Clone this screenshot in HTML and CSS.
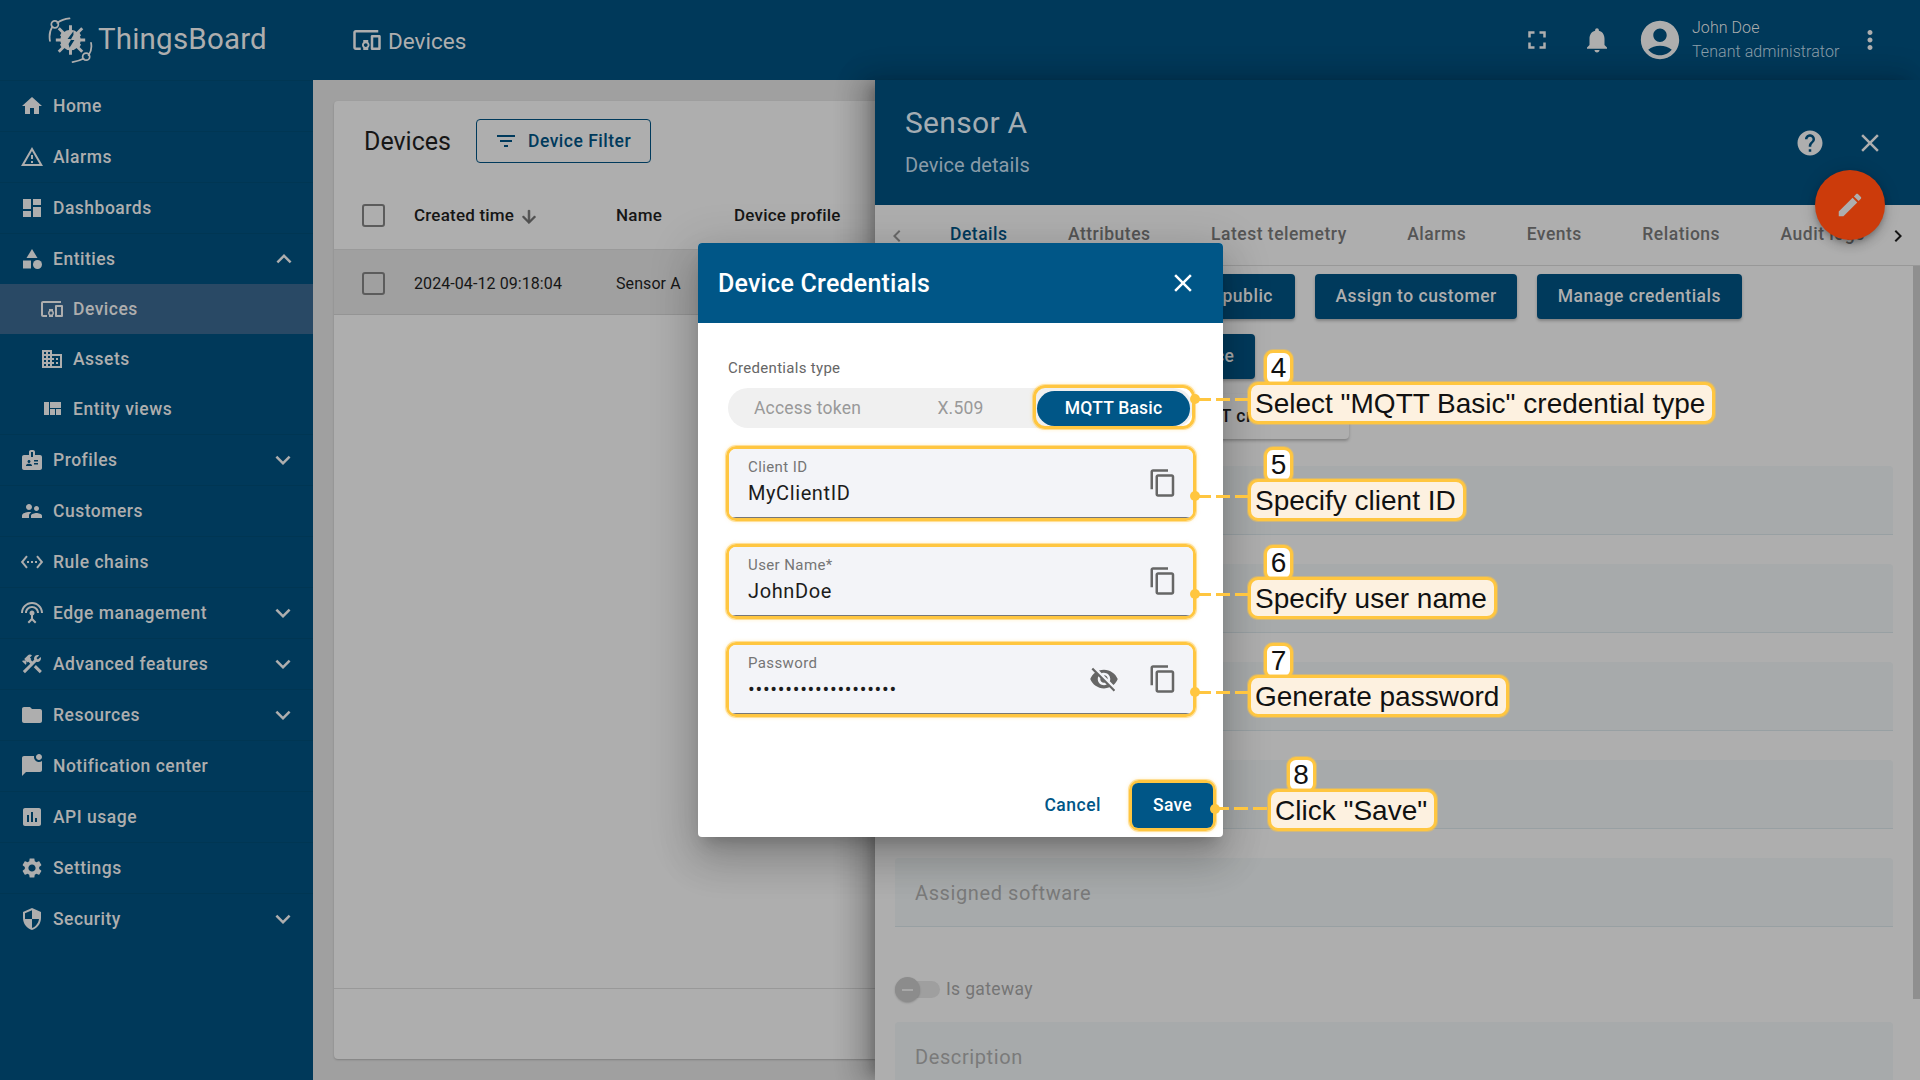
FILE: index.html
```html
<!DOCTYPE html>
<html lang="en">
<head>
<meta charset="utf-8">
<title>ThingsBoard - Devices</title>
<link rel="stylesheet" href="styles.css">
</head>
<body>
<svg class="sprite" width="0" height="0" aria-hidden="true">
  <symbol id="i-home" viewBox="0 0 24 24"><path d="M10 20v-6h4v6h5v-8h3L12 3 2 12h3v8z"/></symbol>
  <symbol id="i-warning" viewBox="0 0 24 24"><path d="M12 5.99L19.53 19H4.47L12 5.99M12 2L1 21h22L12 2zm1 14h-2v2h2v-2zm0-6h-2v4h2v-4z"/></symbol>
  <symbol id="i-dashboard" viewBox="0 0 24 24"><path d="M3 13h8V3H3v10zm0 8h8v-6H3v6zm10 0h8V11h-8v10zm0-18v6h8V3h-8z"/></symbol>
  <symbol id="i-category" viewBox="0 0 24 24"><path d="M12 2l-5.5 9h11z"/><circle cx="17.5" cy="17.5" r="4.5"/><path d="M3 13.5h8v8H3z"/></symbol>
  <symbol id="i-devices" viewBox="0 0 24 24"><path d="M3 6h18V4H3c-1.1 0-2 .9-2 2v12c0 1.1.9 2 2 2h4v-2H3V6zm10 6H9v1.78c-.61.55-1 1.33-1 2.22s.39 1.67 1 2.22V20h4v-1.78c.61-.55 1-1.34 1-2.22s-.39-1.67-1-2.22V12zm-2 5.5c-.83 0-1.5-.67-1.5-1.5s.67-1.5 1.5-1.5 1.5.67 1.5 1.5-.67 1.5-1.5 1.5zM22 8h-6c-.5 0-1 .5-1 1v10c0 .5.5 1 1 1h6c.5 0 1-.5 1-1V9c0-.5-.5-1-1-1zm-1 10h-4v-8h4v8z"/></symbol>
  <symbol id="i-domain" viewBox="0 0 24 24"><path d="M12 7V3H2v18h20V7H12zM6 19H4v-2h2v2zm0-4H4v-2h2v2zm0-4H4V9h2v2zm0-4H4V5h2v2zm4 12H8v-2h2v2zm0-4H8v-2h2v2zm0-4H8V9h2v2zm0-4H8V5h2v2zm10 12h-8v-2h2v-2h-2v-2h2v-2h-2V9h8v10zm-2-8h-2v2h2v-2zm0 4h-2v2h2v-2z"/></symbol>
  <symbol id="i-quilt" viewBox="0 0 24 24"><path d="M10 18h5v-6h-5v6zm-6 0h5V5H4v13zm12 0h5v-6h-5v6zM10 5v6h11V5H10z"/></symbol>
  <symbol id="i-badge" viewBox="0 0 24 24"><path d="M20 7h-5V4c0-1.1-.9-2-2-2h-2c-1.1 0-2 .9-2 2v3H4c-1.1 0-2 .9-2 2v11c0 1.1.9 2 2 2h16c1.1 0 2-.9 2-2V9c0-1.1-.9-2-2-2zM9 12c.83 0 1.5.67 1.5 1.5S9.83 15 9 15s-1.5-.67-1.5-1.5S8.17 12 9 12zm3 6H6v-.43c0-.6.36-1.15.92-1.39.64-.28 1.34-.43 2.08-.43s1.44.15 2.08.43c.55.24.92.78.92 1.39V18zm1-9h-2V4h2v5zm5 7.5h-4V15h4v1.5zm0-3h-4V12h4v1.5z"/></symbol>
  <symbol id="i-people" viewBox="0 0 24 24"><path d="M16.5 12c1.38 0 2.49-1.12 2.49-2.5S17.88 7 16.5 7C15.12 7 14 8.12 14 9.5s1.12 2.5 2.5 2.5zM9 11c1.66 0 2.99-1.34 2.99-3S10.66 5 9 5C7.34 5 6 6.34 6 8s1.34 3 3 3zm7.5 3c-1.83 0-5.5.92-5.5 2.75V19h11v-2.25c0-1.83-3.67-2.75-5.5-2.75zM9 13c-2.33 0-7 1.17-7 3.5V19h7v-2.25c0-.85.33-2.34 2.37-3.47C10.5 13.1 9.66 13 9 13z"/></symbol>
  <symbol id="i-ethernet" viewBox="0 0 24 24"><path d="M7.77 6.76L6.23 5.48.82 12l5.41 6.52 1.54-1.28L3.42 12l4.35-5.24zM7 13h2v-2H7v2zm10-2h-2v2h2v-2zm-6 2h2v-2h-2v2zm6.77-7.52l-1.54 1.28L20.58 12l-4.35 5.24 1.54 1.28L23.18 12l-5.41-6.52z"/></symbol>
  <symbol id="i-antenna" viewBox="0 0 24 24"><path d="M12 5c-3.87 0-7 3.13-7 7h2c0-2.76 2.24-5 5-5s5 2.24 5 5h2c0-3.87-3.13-7-7-7zm1 9.29c.88-.39 1.5-1.26 1.5-2.29 0-1.38-1.12-2.5-2.5-2.5S9.5 10.62 9.5 12c0 1.02.62 1.9 1.5 2.29v3.3L7.59 21 9 22.41l3-3 3 3L16.41 21 13 17.59v-3.3zM12 1C5.93 1 1 5.93 1 12h2c0-4.97 4.03-9 9-9s9 4.03 9 9h2c0-6.07-4.93-11-11-11z"/></symbol>
  <symbol id="i-construction" viewBox="0 0 24 24"><path d="M13.783 15.172l2.121-2.121 5.996 5.996-2.121 2.121zM17.5 10c1.93 0 3.5-1.57 3.5-3.5 0-.58-.16-1.12-.41-1.6l-2.7 2.7-1.49-1.49 2.7-2.7c-.48-.25-1.02-.41-1.6-.41C15.57 3 14 4.57 14 6.5c0 .41.08.8.21 1.16l-1.85 1.85-1.78-1.78.71-.71-1.41-1.41L12 3.49c-1.17-1.17-3.07-1.17-4.24 0L4.22 7.03l1.41 1.41H2.81l-.71.71 3.54 3.54.71-.71V9.15l1.41 1.41.71-.71 1.78 1.78-7.41 7.41 2.12 2.12L16.34 9.79c.36.13.75.21 1.16.21z"/></symbol>
  <symbol id="i-folder" viewBox="0 0 24 24"><path d="M10 4H4c-1.1 0-1.99.9-1.99 2L2 18c0 1.1.9 2 2 2h16c1.1 0 2-.9 2-2V8c0-1.1-.9-2-2-2h-8l-2-2z"/></symbol>
  <symbol id="i-chat" viewBox="0 0 24 24"><path d="M22 6.98V16c0 1.1-.9 2-2 2H6l-4 4V4c0-1.1.9-2 2-2h10.1c-.06.32-.1.66-.1 1 0 2.76 2.24 5 5 5 1.13 0 2.16-.39 3-1.02zM16 3c0 1.66 1.34 3 3 3s3-1.34 3-3-1.34-3-3-3-3 1.34-3 3z"/></symbol>
  <symbol id="i-chart" viewBox="0 0 24 24"><path d="M19 3H5c-1.1 0-2 .9-2 2v14c0 1.1.9 2 2 2h14c1.1 0 2-.9 2-2V5c0-1.1-.9-2-2-2zM9 17H7v-7h2v7zm4 0h-2V7h2v10zm4 0h-2v-4h2v4z"/></symbol>
  <symbol id="i-settings" viewBox="0 0 24 24"><path d="M19.14 12.94c.04-.3.06-.61.06-.94 0-.32-.02-.64-.07-.94l2.03-1.58c.18-.14.23-.41.12-.61l-1.92-3.32c-.12-.22-.37-.29-.59-.22l-2.39.96c-.5-.38-1.03-.7-1.62-.94l-.36-2.54c-.04-.24-.24-.41-.48-.41h-3.84c-.24 0-.43.17-.47.41l-.36 2.54c-.59.24-1.13.57-1.62.94l-2.39-.96c-.22-.08-.47 0-.59.22L2.74 8.87c-.12.21-.08.47.12.61l2.03 1.58c-.05.3-.09.63-.09.94s.02.64.07.94l-2.03 1.58c-.18.14-.23.41-.12.61l1.92 3.32c.12.22.37.29.59.22l2.39-.96c.5.38 1.03.7 1.62.94l.36 2.54c.05.24.24.41.48.41h3.84c.24 0 .44-.17.47-.41l.36-2.54c.59-.24 1.13-.56 1.62-.94l2.39.96c.22.08.47 0 .59-.22l1.92-3.32c.12-.22.07-.47-.12-.61l-2.01-1.58zM12 15.6c-1.98 0-3.6-1.62-3.6-3.6s1.62-3.6 3.6-3.6 3.6 1.62 3.6 3.6-1.62 3.6-3.6 3.6z"/></symbol>
  <symbol id="i-security" viewBox="0 0 24 24"><path d="M12 1L3 5v6c0 5.55 3.84 10.74 9 12 5.16-1.26 9-6.45 9-12V5l-9-4zm0 10.99h7c-.53 4.12-3.28 7.79-7 8.94V12H5V6.3l7-3.11v8.8z"/></symbol>
  <symbol id="i-more" viewBox="0 0 24 24"><path d="M16.59 8.59L12 13.17 7.41 8.59 6 10l6 6 6-6z"/></symbol>
  <symbol id="i-less" viewBox="0 0 24 24"><path d="M12 8l-6 6 1.41 1.41L12 10.83l4.59 4.58L18 14z"/></symbol>
  <symbol id="i-fullscreen" viewBox="0 0 24 24"><path d="M7 14H5v5h5v-2H7v-3zm-2-4h2V7h3V5H5v5zm12 7h-3v2h5v-5h-2v3zM14 5v2h3v3h2V5h-5z"/></symbol>
  <symbol id="i-bell" viewBox="0 0 24 24"><path d="M12 22c1.1 0 2-.9 2-2h-4c0 1.1.89 2 2 2zm6-6v-5c0-3.07-1.64-5.64-4.5-6.32V4c0-.83-.67-1.5-1.5-1.5s-1.5.67-1.5 1.5v.68C7.63 5.36 6 7.92 6 11v5l-2 2v1h16v-1l-2-2z"/></symbol>
  <symbol id="i-account" viewBox="0 0 24 24"><path d="M12 2C6.48 2 2 6.48 2 12s4.48 10 10 10 10-4.48 10-10S17.52 2 12 2zm0 4c1.93 0 3.5 1.57 3.5 3.5S13.93 13 12 13s-3.5-1.57-3.5-3.5S10.07 6 12 6zm0 14c-2.03 0-4.43-.82-6.14-2.88C7.55 15.8 9.68 15 12 15s4.45.8 6.14 2.12C16.43 19.18 14.03 20 12 20z"/></symbol>
  <symbol id="i-vert" viewBox="0 0 24 24"><path d="M12 8c1.1 0 2-.9 2-2s-.9-2-2-2-2 .9-2 2 .9 2 2 2zm0 2c-1.1 0-2 .9-2 2s.9 2 2 2 2-.9 2-2-.9-2-2-2zm0 6c-1.1 0-2 .9-2 2s.9 2 2 2 2-.9 2-2-.9-2-2-2z"/></symbol>
  <symbol id="i-help" viewBox="0 0 24 24"><path d="M12 2C6.48 2 2 6.48 2 12s4.48 10 10 10 10-4.48 10-10S17.52 2 12 2zm1 17h-2v-2h2v2zm2.07-7.75l-.9.92C13.45 12.9 13 13.5 13 15h-2v-.5c0-1.1.45-2.1 1.17-2.83l1.24-1.26c.37-.36.59-.86.59-1.41 0-1.1-.9-2-2-2s-2 .9-2 2H8c0-2.21 1.79-4 4-4s4 1.79 4 4c0 .88-.36 1.68-.93 2.25z"/></symbol>
  <symbol id="i-close" viewBox="0 0 24 24"><path d="M19 6.41L17.59 5 12 10.59 6.41 5 5 6.41 10.59 12 5 17.59 6.41 19 12 13.41 17.59 19 19 17.59 13.41 12z"/></symbol>
  <symbol id="i-edit" viewBox="0 0 24 24"><path d="M3 17.25V21h3.75L17.81 9.94l-3.75-3.75L3 17.25zM20.71 7.04c.39-.39.39-1.02 0-1.41l-2.34-2.34c-.39-.39-1.02-.39-1.41 0l-1.83 1.83 3.75 3.75 1.83-1.83z"/></symbol>
  <symbol id="i-filter" viewBox="0 0 24 24"><path d="M10 18h4v-2h-4v2zM3 6v2h18V6H3zm3 7h12v-2H6v2z"/></symbol>
  <symbol id="i-down" viewBox="0 0 24 24"><path d="M20 12l-1.41-1.41L13 16.17V4h-2v12.17l-5.58-5.59L4 12l8 8 8-8z"/></symbol>
  <symbol id="i-copy" viewBox="0 0 24 24"><path d="M16 1H4c-1.1 0-2 .9-2 2v14h2V3h12V1zm3 4H8c-1.1 0-2 .9-2 2v14c0 1.1.9 2 2 2h11c1.1 0 2-.9 2-2V7c0-1.1-.9-2-2-2zm0 16H8V7h11v14z"/></symbol>
  <symbol id="i-eyeoff" viewBox="0 0 24 24"><path d="M12 7c2.76 0 5 2.24 5 5 0 .65-.13 1.26-.36 1.83l2.92 2.92c1.51-1.26 2.7-2.89 3.43-4.75-1.73-4.39-6-7.5-11-7.5-1.4 0-2.74.25-3.98.7l2.16 2.16C10.74 7.13 11.35 7 12 7zM2 4.27l2.28 2.28.46.46C3.08 8.3 1.78 10.02 1 12c1.73 4.39 6 7.5 11 7.5 1.55 0 3.03-.3 4.38-.84l.42.42L19.73 22 21 20.73 3.27 3 2 4.27zM7.53 9.8l1.55 1.55c-.05.21-.08.43-.08.65 0 1.66 1.34 3 3 3 .22 0 .44-.03.65-.08l1.55 1.55c-.67.33-1.41.53-2.2.53-2.76 0-5-2.24-5-5 0-.79.2-1.53.53-2.2zm4.31-.78l3.15 3.15.02-.16c0-1.66-1.34-3-3-3l-.17.01z"/></symbol>
  <symbol id="i-left" viewBox="0 0 24 24"><path d="M15.41 7.41L14 6l-6 6 6 6 1.41-1.41L10.83 12z"/></symbol>
  <symbol id="i-right" viewBox="0 0 24 24"><path d="M10 6L8.59 7.41 13.17 12l-4.58 4.59L10 18l6-6z"/></symbol>
</svg>

<div class="app">
  <aside class="sidebar">
    <div class="logo">
      <svg class="logo-mark" viewBox="0 0 46 46">
        <g fill="none" stroke="#aeaeae" stroke-width="1.8" stroke-linecap="round">
          <path d="M2 24C1 18 2 13 4.500 9.500"/>
          <path d="M9.500 5.500C13 3 17 1.500 22 1"/>
          <circle cx="7" cy="7" r="3.600"/>
          <path d="M44 26C45 31 44 35 41.500 38.500"/>
          <path d="M36.500 42C33 44 29 45 25 45.500"/>
          <circle cx="39" cy="40" r="3.600"/>
        </g>
        <g fill="#aeaeae">
          <circle cx="23" cy="23" r="10.500"/>
          <g stroke="#aeaeae" stroke-width="3">
            <path d="M11 11l24 24M35 11L11 35M23 8v30M8 23h30M13 17l20 12M33 17L13 29"/>
          </g>
        </g>
        <path d="M26 14l-6 8h4l-3 5 1 4 5-8h-4l3-5z" fill="#00395a"/>
      </svg>
      <span class="logo-text">ThingsBoard</span>
    </div>
    <nav class="menu">
      <a class="item"><svg class="ic"><use href="#i-home"/></svg><span>Home</span></a>
      <a class="item"><svg class="ic"><use href="#i-warning"/></svg><span>Alarms</span></a>
      <a class="item"><svg class="ic"><use href="#i-dashboard"/></svg><span>Dashboards</span></a>
      <a class="item open"><svg class="ic"><use href="#i-category"/></svg><span>Entities</span><svg class="chev"><use href="#i-less"/></svg></a>
      <div class="subgroup">
        <a class="sub active"><svg class="ic"><use href="#i-devices"/></svg><span>Devices</span></a>
        <a class="sub"><svg class="ic"><use href="#i-domain"/></svg><span>Assets</span></a>
        <a class="sub"><svg class="ic"><use href="#i-quilt"/></svg><span>Entity views</span></a>
      </div>
      <a class="item"><svg class="ic"><use href="#i-badge"/></svg><span>Profiles</span><svg class="chev"><use href="#i-more"/></svg></a>
      <a class="item"><svg class="ic"><use href="#i-people"/></svg><span>Customers</span></a>
      <a class="item"><svg class="ic"><use href="#i-ethernet"/></svg><span>Rule chains</span></a>
      <a class="item"><svg class="ic"><use href="#i-antenna"/></svg><span>Edge management</span><svg class="chev"><use href="#i-more"/></svg></a>
      <a class="item"><svg class="ic"><use href="#i-construction"/></svg><span>Advanced features</span><svg class="chev"><use href="#i-more"/></svg></a>
      <a class="item"><svg class="ic"><use href="#i-folder"/></svg><span>Resources</span><svg class="chev"><use href="#i-more"/></svg></a>
      <a class="item"><svg class="ic"><use href="#i-chat"/></svg><span>Notification center</span></a>
      <a class="item"><svg class="ic"><use href="#i-chart"/></svg><span>API usage</span></a>
      <a class="item"><svg class="ic"><use href="#i-settings"/></svg><span>Settings</span></a>
      <a class="item"><svg class="ic"><use href="#i-security"/></svg><span>Security</span><svg class="chev"><use href="#i-more"/></svg></a>
    </nav>
  </aside>

  <div class="column">
    <header class="topbar">
      <div class="crumb"><svg class="ic30"><use href="#i-devices"/></svg><span>Devices</span></div>
      <div class="top-actions">
        <span class="icon-btn"><svg class="ic30"><use href="#i-fullscreen"/></svg></span>
        <span class="icon-btn"><svg class="ic30"><use href="#i-bell"/></svg></span>
        <svg class="avatar"><use href="#i-account"/></svg>
        <div class="user"><div class="user-name">John Doe</div><div class="user-role">Tenant administrator</div></div>
        <span class="icon-btn"><svg class="ic30"><use href="#i-vert"/></svg></span>
      </div>
    </header>

    <div class="workspace">
      <main class="list-area">
        <section class="card">
          <div class="card-bar">
            <h2 class="card-title">Devices</h2>
            <button class="filter-btn"><svg class="ic24"><use href="#i-filter"/></svg><span>Device Filter</span></button>
          </div>
          <div class="table-row table-head">
            <span class="check"></span>
            <span class="sort">Created time<svg class="ic20"><use href="#i-down"/></svg></span>
            <span>Name</span>
            <span>Device profile</span>
          </div>
          <div class="table-row table-body">
            <span class="check"></span>
            <span>2024-04-12 09:18:04</span>
            <span>Sensor A</span>
            <span></span>
          </div>
          <div class="card-fill"></div>
          <div class="card-foot"></div>
        </section>
      </main>

      <section class="panel">
        <div class="panel-head">
          <div class="panel-titles">
            <div class="panel-title">Sensor A</div>
            <div class="panel-sub">Device details</div>
          </div>
          <div class="panel-actions">
            <span class="icon-btn"><svg class="ic30"><use href="#i-help"/></svg></span>
            <span class="icon-btn"><svg class="ic30"><use href="#i-close"/></svg></span>
          </div>
        </div>
        <div class="fab"><svg class="ic30"><use href="#i-edit"/></svg></div>
        <div class="tabs">
          <svg class="tab-arrow dim"><use href="#i-left"/></svg>
          <div class="tab-list">
            <span class="tab current">Details</span>
            <span class="tab">Attributes</span>
            <span class="tab">Latest telemetry</span>
            <span class="tab">Alarms</span>
            <span class="tab">Events</span>
            <span class="tab">Relations</span>
            <span class="tab">Audit logs</span>
          </div>
          <svg class="tab-arrow"><use href="#i-right"/></svg>
        </div>
        <div class="panel-body">
          <div class="btn-row">
            <button class="btn w-open">Open details page</button>
            <button class="btn w-public">Make device public</button>
            <button class="btn">Assign to customer</button>
            <button class="btn">Manage credentials</button>
          </div>
          <div class="btn-row">
            <button class="btn w-del">Delete device</button>
          </div>
          <div class="btn-row">
            <button class="btn light w-copy">Copy MQTT credentials</button>
          </div>
          <div class="d-field"></div>
          <div class="d-field"></div>
          <div class="d-field"></div>
          <div class="d-field"></div>
          <div class="d-field"><span>Assigned software</span></div>
          <div class="gateway"><span class="toggle"><span class="thumb"></span></span><span>Is gateway</span></div>
          <div class="d-field"><span>Description</span></div>
        </div>
        <div class="scrollbar"></div>
      </section>
    </div>
  </div>
</div>

<div class="dialog">
  <div class="dialog-head">
    <span class="dialog-title">Device Credentials</span>
    <svg class="ic30"><use href="#i-close"/></svg>
  </div>
  <div class="dialog-body">
    <div class="type-label">Credentials type</div>
    <div class="segment">
      <span class="seg-item">Access token</span>
      <span class="seg-item">X.509</span>
      <span class="seg-item selected">MQTT Basic</span>
    </div>
    <div class="hl-field">
      <div class="field">
        <div class="field-text"><div class="field-label">Client ID</div><div class="field-value">MyClientID</div></div>
        <svg class="ic30 field-ic"><use href="#i-copy"/></svg>
      </div>
    </div>
    <div class="hl-field">
      <div class="field">
        <div class="field-text"><div class="field-label">User Name*</div><div class="field-value">JohnDoe</div></div>
        <svg class="ic30 field-ic"><use href="#i-copy"/></svg>
      </div>
    </div>
    <div class="hl-field">
      <div class="field">
        <div class="field-text"><div class="field-label">Password</div><div class="field-value dots">••••••••••••••••••••</div></div>
        <svg class="ic30 field-ic"><use href="#i-eyeoff"/></svg>
        <svg class="ic30 field-ic"><use href="#i-copy"/></svg>
      </div>
    </div>
  </div>
  <div class="dialog-foot">
    <span class="cancel">Cancel</span>
    <span class="save-hl"><button class="save">Save</button></span>
  </div>
</div>

<div class="note n4">
  <span class="line"></span><span class="dot"></span>
  <span class="badge">4</span><span class="bubble">Select "MQTT Basic" credential type</span>
</div>
<div class="note n5">
  <span class="line"></span><span class="dot"></span>
  <span class="badge">5</span><span class="bubble">Specify client ID</span>
</div>
<div class="note n6">
  <span class="line"></span><span class="dot"></span>
  <span class="badge">6</span><span class="bubble">Specify user name</span>
</div>
<div class="note n7">
  <span class="line"></span><span class="dot"></span>
  <span class="badge">7</span><span class="bubble">Generate password</span>
</div>
<div class="note n8">
  <span class="line"></span><span class="dot"></span>
  <span class="badge">8</span><span class="bubble">Click "Save"</span>
</div>
</body>
</html>
```
FILE: styles.css
```css
* { box-sizing: border-box; }
html, body { margin: 0; height: 100%; }
body {
  width: 1920px;
  height: 1080px;
  overflow: hidden;
  font-family: Roboto, "Noto Sans", sans-serif;
  background: #a0a0a0;
  position: relative;
}
.sprite { position: absolute; }
svg { fill: currentColor; display: block; flex: none; }
button { font-family: inherit; border: 0; margin: 0; }

.ic { width: 24px; height: 24px; }
.ic20 { width: 20px; height: 20px; }
.ic24 { width: 24px; height: 24px; }
.ic30 { width: 30px; height: 30px; }

.app { display: grid; grid-template-columns: 313px 1fr; grid-template-rows: 1080px; height: 1080px; }

/* sidebar */
.sidebar { background: #00395a; color: #aeaeae; height: 1080px; }
.logo { height: 80px; display: flex; align-items: center; padding-left: 48px; gap: 5px; }
.logo-mark { width: 45px; height: 46px; }
.logo-text { font-size: 29.500px; letter-spacing: .2px; line-height: 1; }
.menu { display: flex; flex-direction: column; }
.item {
  height: 51px;
  display: flex;
  align-items: center;
  padding: 0 0 1px 19.500px;
  gap: 9.500px;
  border-top: 1px solid #003653;
  font-size: 17.500px;
  font-weight: 500;
  letter-spacing: .5px;
}
.item svg { margin-top: 1px; }
.item span { flex: 1; }
.chev { width: 30px; height: 30px; margin-right: 15px; }
.open .chev { margin-right: 14px; }
.subgroup { display: flex; flex-direction: column; }
.sub {
  height: 50px;
  display: flex;
  align-items: center;
  padding-left: 39.500px;
  gap: 9.500px;
  font-size: 17.500px;
  font-weight: 500;
  letter-spacing: .5px;
}
.sub.active { background: #294965; }

/* top bar */
.column { display: flex; flex-direction: column; min-width: 0; height: 1080px; overflow: hidden; }
.topbar { height: 80px; flex: none; background: #00395a; color: #aeaeae; display: flex; align-items: center; padding: 0 20px 0 39px; }
.crumb { display: flex; align-items: center; gap: 6px; font-size: 22.500px; }
.crumb span { margin-top: 2px; }
.top-actions { margin-left: auto; display: flex; align-items: center; }
.icon-btn { width: 60px; height: 60px; display: flex; align-items: center; justify-content: center; }
.avatar { width: 46px; height: 46px; margin: 0 9px 0 10px; }
.user { width: 148px; font-weight: 300; font-size: 16px; line-height: 24px; white-space: nowrap; letter-spacing: .06px; }
.user-role { color: #8c9faa; }

/* list */
.workspace { flex: 1; display: flex; min-height: 0; }
.list-area { width: 562px; flex: none; padding: 21px 0 21px 21px; background: #a0a0a0; }
.card {
  height: 100%;
  background: #aeaeae;
  border-radius: 4px 0 0 4px;
  box-shadow: 0 1px 2px rgba(0,0,0,.2);
  display: flex;
  flex-direction: column;
}
.card-bar { height: 80px; display: flex; align-items: center; padding-left: 30px; gap: 25px; flex: none; }
.card-title { margin: 0; font-size: 25px; font-weight: 400; color: #161616; }
.filter-btn {
  height: 44px;
  width: 175px;
  background: transparent;
  border: 1.500px solid #003a5c;
  border-radius: 4px;
  color: #003a5c;
  display: flex;
  align-items: center;
  padding: 0 0 0 17px;
  gap: 10px;
  font-size: 17.500px;
  font-weight: 500;
  letter-spacing: .5px;
}
.table-row {
  display: grid;
  grid-template-columns: 52px 202px 118px 1fr;
  padding-left: 28px;
  align-items: center;
  color: #161616;
  white-space: nowrap;
  flex: none;
}
.table-head { height: 69px; font-size: 17px; letter-spacing: .2px; font-weight: 500; border-bottom: 1px solid #9a9a9a; }
.table-body { height: 65px; padding-top: 2px; font-size: 16px; letter-spacing: .08px; background: #a0a0a0; border-bottom: 1px solid #949494; }
.check { width: 23px; height: 23px; border: 2.500px solid #5c5c5c; border-radius: 3px; }
.sort { display: flex; align-items: center; gap: 5px; }
.sort svg { color: #4f4f4f; margin-top: 3px; stroke: currentColor; stroke-width: .8px; }
.card-fill { flex: 1; }
.card-foot { height: 71px; flex: none; border-top: 1px solid #999; }

/* details panel */
.panel {
  width: 1045px;
  flex: none;
  position: relative;
  background: #aeaeae;
  box-shadow: -8px 0 10px -5px rgba(0,0,0,.2), -16px 0 24px 2px rgba(0,0,0,.14), -6px 0 30px 5px rgba(0,0,0,.12);
  overflow: hidden;
  display: flex;
  flex-direction: column;
}
.panel-head {
  height: 125px;
  flex: none;
  background: #00395a;
  color: #aeaeae;
  display: flex;
  align-items: center;
  justify-content: space-between;
  padding: 0 20px 0 30px;
}
.panel-titles { display: flex; flex-direction: column; gap: 12px; margin-top: -4px; }
.panel-title { font-size: 30px; line-height: 36px; letter-spacing: .3px; color: #a4adb3; }
.panel-sub { font-size: 20px; line-height: 24px; letter-spacing: .1px; color: #8a9ca8; }
.panel-actions { display: flex; }
.fab {
  position: absolute;
  left: 940px;
  top: 90px;
  width: 70px;
  height: 70px;
  border-radius: 50%;
  background: #cc3b0b;
  color: #aeaeae;
  display: flex;
  align-items: center;
  justify-content: center;
  box-shadow: 0 3px 5px -1px rgba(0,0,0,.2), 0 6px 10px 0 rgba(0,0,0,.14), 0 1px 18px 0 rgba(0,0,0,.12);
  z-index: 2;
}
.tabs {
  height: 61px;
  flex: none;
  display: flex;
  align-items: center;
  border-bottom: 1px solid #989898;
  padding: 0 0 2px 10px;
  position: relative;
}
.tab-arrow { width: 24px; height: 24px; color: #161616; position: absolute; right: 10px; top: 19px; }
.tab-arrow.dim { left: 10px; right: auto; color: #6a6a6a; }
.tab-list { display: flex; gap: 60.500px; padding-left: 65px; font-size: 17.500px; font-weight: 500; letter-spacing: .5px; color: #555; white-space: nowrap; }
.tab.current { color: #003a5c; }
.panel-body { padding: 8px 27px 0 20px; flex: 1; min-height: 0; overflow: hidden; }
.btn-row { display: flex; gap: 20px; margin-bottom: 15px; justify-content: flex-start; }
.btn {
  height: 45px;
  padding: 0 20.500px 2px;
  background: #003a5c;
  color: #aeaeae;
  border-radius: 4px;
  font-size: 17.500px;
  font-weight: 500;
  letter-spacing: .5px;
  white-space: nowrap;
  box-shadow: 0 2px 3px rgba(0,0,0,.25);
}
.w-open { width: 177px; }
.w-public { width: 203px; }
.w-del { width: 360px; text-align: right; }
.btn.light { background: #aeaeae; color: #161616; }
.w-copy { width: 454px; text-align: right; }
.d-field {
  height: 69px;
  margin-bottom: 29px;
  background: #a7aaab;
  border-bottom: 1px solid #98a0a3;
  border-radius: 4px 4px 0 0;
  padding: 1px 0 0 20px;
  display: flex;
  align-items: center;
  font-size: 20px;
  color: #7a7a7a;
  letter-spacing: .6px;
}
.btn-row + .d-field { margin-top: 27px; }
.gateway {
  height: 38px;
  margin: 43px 0 14px;
  display: flex;
  align-items: center;
  gap: 6px;
  color: #757575;
  font-size: 17.500px;
  letter-spacing: .35px;
}
.toggle { width: 45px; height: 17px; border-radius: 9px; background: #9f9f9f; position: relative; display: block; margin-top: 1px; }
.thumb {
  position: absolute;
  left: 0;
  top: -4px;
  width: 25px;
  height: 25px;
  border-radius: 50%;
  background: #8c8c8c;
  box-shadow: 0 1px 2px rgba(0,0,0,.2);
}
.thumb::after { content: ""; position: absolute; left: 7px; top: 11.500px; width: 11px; height: 2px; background: #a8a8a8; }
.scrollbar { position: absolute; right: 0; top: 186px; width: 7px; height: 733px; background: #8f8f8f; }

/* dialog */
.dialog {
  position: absolute;
  left: 698px;
  top: 243px;
  width: 525px;
  height: 594px;
  background: #fff;
  border-radius: 4px;
  box-shadow: 0 11px 15px -7px rgba(0,0,0,.2), 0 24px 38px 3px rgba(0,0,0,.14), 0 9px 46px 8px rgba(0,0,0,.12);
  display: flex;
  flex-direction: column;
  overflow: visible;
}
.dialog-head {
  height: 80px;
  flex: none;
  background: #005687;
  color: #fff;
  display: flex;
  align-items: center;
  justify-content: space-between;
  padding: 0 25px 0 20px;
  border-radius: 4px 4px 0 0;
}
.dialog-title { font-size: 25px; font-weight: 500; letter-spacing: .22px; }
.dialog-body { padding: 35px 25px 0 30px; flex: 1; }
.type-label { font-size: 15px; line-height: 20px; color: #666; letter-spacing: .3px; }
.segment {
  width: 465px;
  height: 40px;
  margin: 10px 0 18px;
  background: #f0f0f0;
  border-radius: 20px;
  padding: 3px 3px 2px;
  display: flex;
  align-items: center;
}
.seg-item { flex: 1; text-align: center; font-size: 17.500px; color: #999; letter-spacing: .2px; padding-bottom: 2px; }
.seg-item.selected {
  flex: 0 0 153px;
  height: 35px;
  line-height: 35px;
  padding: 0;
  border-radius: 18px;
  background: #005687;
  color: #fff;
  font-weight: 500;
  position: relative;
}
.seg-item.selected::after {
  content: "";
  position: absolute;
  inset: -6px -5px -3px -4px;
  border: 3px solid #ffc640;
  border-radius: 12px;
  box-shadow: 0 0 0 1px rgba(255,198,64,.45), 0 0 4px rgba(255,198,64,.4);
}
.hl-field {
  width: 470px;
  height: 75px;
  margin: 0 0 23px -2px;
  border: 3px solid #ffc640;
  border-radius: 10px;
  box-shadow: 0 0 0 1px rgba(255,198,64,.45), 0 0 4px rgba(255,198,64,.4);
  overflow: hidden;
}
.field {
  height: 100%;
  background: #f3f4f8;
  border-bottom: 1px solid #777;
  display: flex;
  align-items: center;
  padding: 0 15.500px 0 19px;
  gap: 29px;
}
.field-text { flex: 1; min-width: 0; margin-top: -3px; }
.field-label { font-size: 15px; line-height: 20px; color: #757575; letter-spacing: .4px; }
.field-value { font-size: 20px; line-height: 26px; color: #1c1c1c; letter-spacing: .6px; margin-top: 3px; }
.dots { font-size: 20px; letter-spacing: .7px; }
.field-ic { color: #666; }
.dialog-foot {
  height: 51px;
  flex: none;
  margin-bottom: 6px;
  display: flex;
  align-items: center;
  justify-content: flex-end;
  padding-right: 7px;
  gap: 28px;
}
.cancel { color: #005687; font-size: 17.500px; font-weight: 500; letter-spacing: .5px; margin-bottom: 2px; }
.save-hl { display: block; border: 3px solid #ffc640; border-radius: 10px; box-shadow: 0 0 0 1px rgba(255,198,64,.45), 0 0 4px rgba(255,198,64,.4); }
.save {
  display: block;
  width: 81px;
  height: 45px;
  padding: 0 0 2px;
  background: #005687;
  color: #fff;
  border-radius: 6px;
  font-size: 17.500px;
  font-weight: 500;
  letter-spacing: .25px;
}

/* annotations */
.note { position: absolute; height: 0; width: 0; z-index: 5; }
.n4 { left: 1197px; top: 399px; }
.n5 { left: 1197px; top: 496px; }
.n6 { left: 1197px; top: 594px; }
.n7 { left: 1197px; top: 692px; }
.n8 { left: 1215px; top: 808px; }
.line {
  position: absolute;
  left: 0;
  top: -1.500px;
  width: 52px;
  height: 3px;
  background: repeating-linear-gradient(90deg, #ffc640 0 14px, transparent 14px 19px);
}
.dot { position: absolute; left: -7px; top: -5px; width: 10px; height: 10px; border-radius: 50%; background: #ffc640; }
.bubble {
  position: absolute;
  left: 51px;
  top: -17px;
  height: 42px;
  padding: 0 7px 0 4px;
  border: 3px solid #ffc640;
  border-radius: 10px;
  background: #fdf1e0;
  color: #111;
  font-family: "Liberation Sans", Arial, sans-serif;
  font-size: 28px;
  line-height: 38px;
  white-space: nowrap;
  box-shadow: 0 0 0 1px rgba(255,198,64,.45);
}
.badge {
  position: absolute;
  left: 67px;
  top: -49px;
  width: 29px;
  height: 36px;
  border: 3px solid #ffc640;
  border-radius: 9px;
  background: #fff;
  color: #111;
  font-family: "Liberation Sans", Arial, sans-serif;
  font-size: 28px;
  line-height: 30px;
  text-align: center;
  box-shadow: 0 0 0 1px rgba(255,198,64,.45);
}
.n8 .bubble { left: 53px; top: -19px; }
.n8 .badge { left: 71.500px; top: -51px; }
.n8 .line { width: 54px; }
.n8 .dot { left: -5px; top: -4px; }
```
